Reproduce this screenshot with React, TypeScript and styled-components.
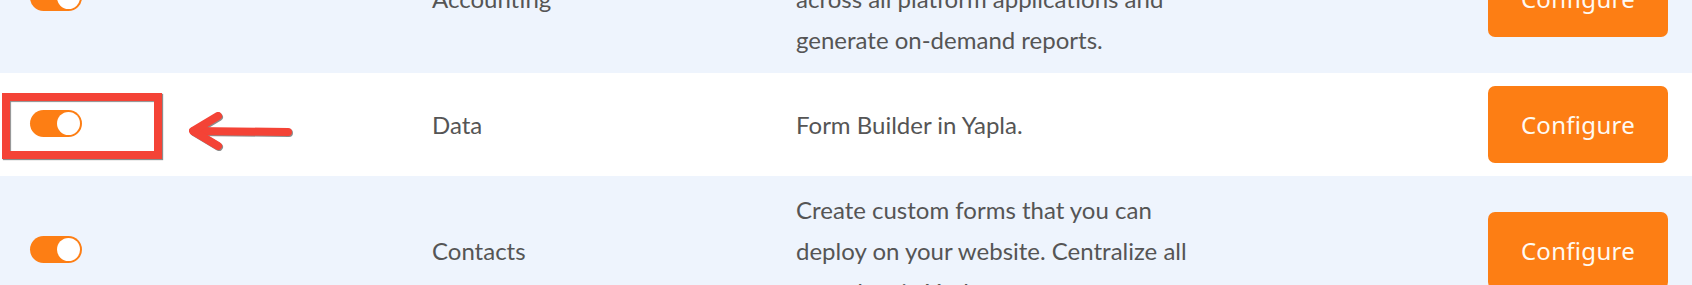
import React from 'react';
import styled, { createGlobalStyle } from 'styled-components';

const GlobalStyle = createGlobalStyle`
  html, body {
    margin: 0;
    padding: 0;
    background: #ffffff;
    overflow: hidden;
  }
  body {
    font-family: 'Lato', 'Noto Sans', sans-serif;
  }
`;

// the screenshot is scrolled a bit into the list
const List = styled.div`
  width: 1692px;
  margin-top: -76px;
`;

const Row = styled.div<{ $shaded: boolean }>`
  position: relative;
  display: grid;
  grid-template-columns: 402px 364px 692px 180px;
  align-items: center;
  padding: 13px 24px 13px 30px;
  background: ${(p) => (p.$shaded ? '#eef4fd' : '#ffffff')};
`;

const Toggle = styled.span`
  position: relative;
  display: inline-block;
  width: 52px;
  height: 27px;
  border-radius: 14px;
  background: #fd7e14;

  &::after {
    content: '';
    position: absolute;
    top: 2px;
    right: 2px;
    width: 23px;
    height: 23px;
    border-radius: 50%;
    background: #ffffff;
  }
`;

const Label = styled.div`
  font-size: 24px;
  line-height: 41px;
  color: #555555;
`;

const Description = styled.div`
  font-size: 24px;
  line-height: 41px;
  color: #555555;
`;

const Line = styled.span`
  display: block;
  white-space: nowrap;
`;

const ConfigureButton = styled.button`
  width: 180px;
  height: 77px;
  border: none;
  border-radius: 7px;
  background: #fd7e14;
  color: #fffaf2;
  font-family: 'Noto Sans', 'Open Sans', sans-serif;
  font-size: 24px;
  letter-spacing: 0.3px;
  cursor: pointer;
`;

// annotation overlays drawn on top of the screenshot
const Highlight = styled.div`
  position: absolute;
  left: 2px;
  top: 20px;
  width: 144px;
  height: 50px;
  border: 8px solid #f44336;
  box-shadow: 1px 1px 1px rgba(0, 0, 0, 0.45), inset 1px 1px 1px rgba(0, 0, 0, 0.45);
`;

const Arrow = styled.svg`
  position: absolute;
  left: 186px;
  top: 35px;
  overflow: visible;
`;

type Module = {
  name: string;
  lines: string[];
};

const modules: Module[] = [
  {
    name: 'Accounting',
    lines: [
      'Track every financial transaction',
      'across all platform applications and',
      'generate on-demand reports.',
    ],
  },
  { name: 'Data', lines: ['Form Builder in Yapla.'] },
  {
    name: 'Contacts',
    lines: [
      'Create custom forms that you can',
      'deploy on your website. Centralize all',
      'your data in Yapla.',
    ],
  },
];

const App: React.FC = () => {
  return (
    <>
      <GlobalStyle />
      <List>
        {modules.map((m, i) => (
          <Row key={m.name} $shaded={i !== 1}>
            <div>
              <Toggle />
            </div>
            <Label>{m.name}</Label>
            <Description>
              {m.lines.map((l) => (
                <Line key={l}>{l}</Line>
              ))}
            </Description>
            <ConfigureButton>Configure</ConfigureButton>
            {i === 1 && (
              <>
                <Highlight />
                <Arrow width="110" height="44" viewBox="0 0 110 44">
                  <g
                    fill="none"
                    stroke="#f44336"
                    strokeWidth="8"
                    strokeLinecap="round"
                    strokeLinejoin="round"
                    style={{ filter: 'drop-shadow(1px 1px 0.6px rgba(0,0,0,0.45))' }}
                  >
                    <path d="M102 24 L8 23" />
                    <path d="M32 8 L7 23 L32 38" />
                  </g>
                </Arrow>
              </>
            )}
          </Row>
        ))}
      </List>
    </>
  );
};

export default App;
